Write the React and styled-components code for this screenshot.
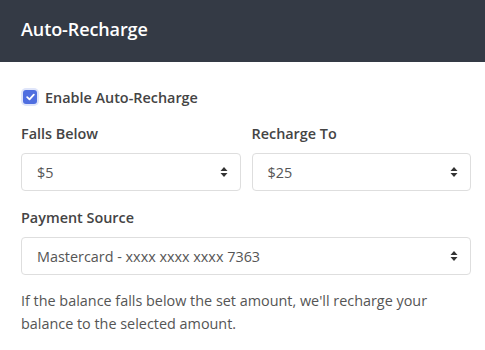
import React from "react";
import styled, { createGlobalStyle } from "styled-components";

const GlobalStyle = createGlobalStyle`
  body {
    margin: 0;
    background: #fff;
    font-family: "Open Sans", "Noto Sans", sans-serif;
  }
`;

const Panel = styled.div`
  width: 485px;
  height: 350px;
  overflow: hidden;
  background: #fff;
`;

const Header = styled.div`
  height: 62px;
  background: #343a45;
  display: flex;
  align-items: center;
  padding: 0 21px;
  box-sizing: border-box;
`;

const Title = styled.h2`
  margin: 0 0 4px;
  color: #fff;
  font-size: 18px;
  font-weight: 600;
  letter-spacing: -0.1px;
`;

const Body = styled.div`
  padding: 24px 14px 0 21px;
  display: flex;
  flex-direction: column;
`;

const CheckRow = styled.label`
  display: flex;
  align-items: center;
  gap: 8px;
  font-size: 14.4px;
  font-weight: 600;
  color: #444;
  height: 22px;
`;

const Box = styled.span`
  width: 14px;
  height: 14px;
  border-radius: 3px;
  background: #4f6ee0;
  box-shadow: 0 0 0 2px #dfe5fa;
  display: flex;
  align-items: center;
  justify-content: center;
  margin-left: 2px;
`;

const Row = styled.div`
  display: grid;
  grid-template-columns: 1fr 1fr;
  gap: 11px;
  margin-top: 16px;
`;

const Field = styled.div`
  display: flex;
  flex-direction: column;
  margin-top: ${(p) => p.$mt || 0}px;
`;

const Label = styled.div`
  font-size: 14.4px;
  font-weight: 600;
  color: #444;
  line-height: 19px;
  margin-bottom: 10px;
`;

const SelectWrap = styled.div`
  position: relative;
  height: 38px;
  border: 1px solid #dedede;
  border-radius: 4px;
  box-sizing: border-box;
  display: flex;
  align-items: center;
  padding-left: 15px;
  font-size: 14.4px;
  color: #555;
`;

const Arrows = styled.svg`
  position: absolute;
  right: 12px;
  top: 50%;
  transform: translateY(-50%);
`;

const Help = styled.p`
  margin: 14px 0 0;
  font-size: 14.4px;
  line-height: 23px;
  color: #555;
`;

const Select = ({ value }) => (
  <SelectWrap>
    {value}
    <Arrows width="8" height="12" viewBox="0 0 8 12">
      <path d="M4 1 L7.5 5 L0.5 5 Z M4 11 L7.5 7 L0.5 7 Z" fill="#333" />
    </Arrows>
  </SelectWrap>
);

export default function App() {
  return (
    <>
      <GlobalStyle />
      <Panel>
        <Header>
          <Title>Auto-Recharge</Title>
        </Header>
        <Body>
          <CheckRow>
            <Box>
              <svg width="9" height="8" viewBox="0 0 9 8">
                <path d="M1.2 4.2 L3.5 6.3 L7.8 1.6" stroke="#fff" strokeWidth="1.8" fill="none" strokeLinecap="round" strokeLinejoin="round" />
              </svg>
            </Box>
            Enable Auto-Recharge
          </CheckRow>
          <Row>
            <Field>
              <Label>Falls Below</Label>
              <Select value="$5" />
            </Field>
            <Field>
              <Label>Recharge To</Label>
              <Select value="$25" />
            </Field>
          </Row>
          <Field $mt={17}>
            <Label>Payment Source</Label>
            <Select value="Mastercard - xxxx xxxx xxxx 7363" />
          </Field>
          <Help>
            If the balance falls below the set amount, we'll recharge your balance to the selected amount.
          </Help>
        </Body>
      </Panel>
    </>
  );
}
